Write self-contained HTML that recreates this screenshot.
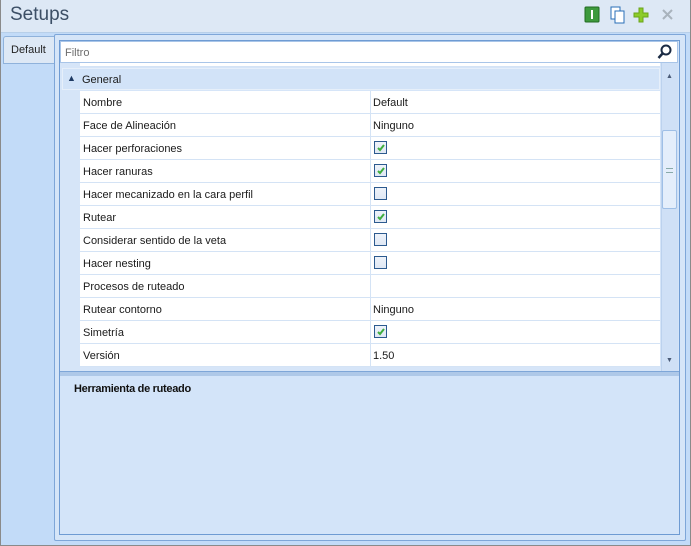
<!DOCTYPE html>
<html><head><style>
*{margin:0;padding:0;box-sizing:border-box}
body{width:691px;height:546px;overflow:hidden;background:#c2dbf8;font-family:"Liberation Sans",sans-serif;font-size:11px;color:#1a1a1a;position:relative}
.a{position:absolute}
.row{position:absolute;left:80px;width:580px;height:23px;border-bottom:1px solid #d4e3f5;background:#fff}
.row .n{position:absolute;left:3px;top:6px}
.row .v{position:absolute;left:293px;top:6px}
.row .sep{position:absolute;left:290px;top:0;width:1px;height:23px;background:#d4e3f5}
.cb{position:absolute;left:294px;top:4px;width:13px;height:13px;border:1px solid #2c5a8f;background:linear-gradient(#eef3fa,#dfe8f4)}
.cb svg{position:absolute;left:1px;top:1px}
</style></head><body>
<div class="a" style="left:0;top:0;width:691px;height:546px;border:1px solid #8a8a8a;border-top:none"></div>
<div class="a" style="left:1px;top:0;width:689px;height:33px;background:#dde8f5;border-bottom:1px solid #b7cfe9"></div>
<div class="a" style="left:10px;top:4px;font-size:19px;color:#3c4f66">Setups</div>
<svg class="a" style="left:584px;top:6px" width="100" height="18">
<rect x="1" y="1" width="14" height="15" rx="1" fill="#3d9a3d" stroke="#216b21"/><rect x="7" y="4" width="2" height="9" fill="#fff"/>
<rect x="27" y="1" width="9" height="12" fill="#fff" stroke="#2a6fb8"/><rect x="31" y="5" width="9" height="12" fill="#fff" stroke="#2a6fb8"/>
<path d="M55 2h4v5h5v4h-5v5h-4v-5h-5v-4h5z" fill="#8ccc2a" stroke="#6aa51a"/>
<path d="M79 4l9 9M88 4l-9 9" stroke="#a9b3bd" stroke-width="2"/>
</svg>
<div class="a" style="left:3px;top:36px;width:53px;height:28px;background:#dde8f5;border:1px solid #8fb2db;border-right:none;border-radius:3px 0 0 0"></div>
<div class="a" style="left:11px;top:44px;color:#222">Default</div>
<div class="a" style="left:54px;top:34px;width:632px;height:507px;border:1px solid #7ea6d8;background:#d5e5f8;border-radius:2px"></div>
<div class="a" style="left:59px;top:40px;width:621px;height:495px;border:1px solid #6e9bd3;background:#d3e4f9"></div>
<div class="a" style="left:60px;top:41px;width:618px;height:22px;background:#fff;border:1px solid #a9c5e8"></div>
<div class="a" style="left:65px;top:47px;color:#6d6d6d">Filtro</div>
<svg class="a" style="left:657px;top:44px" width="16" height="16"><circle cx="9" cy="6" r="4.5" fill="none" stroke="#1b2b44" stroke-width="2"/><path d="M6 9l-4.5 5" stroke="#1b2b44" stroke-width="2.5"/></svg>
<div class="a" style="left:60px;top:63px;width:601px;height:308px;background:#d6e5f8"></div>
<div class="a" style="left:80px;top:63px;width:580px;height:4px;background:#fff;border-bottom:1px solid #d4e3f5"></div>
<div class="a" style="left:62px;top:68px;width:598px;height:22px;background:#d2e3f8;border:1px solid #e6effa"></div>
<div class="a" style="left:67px;top:73px;font-size:9px;color:#1e3a63">&#9650;</div>
<div class="a" style="left:82px;top:74px">General</div>
<div class="row" style="top:91px"><span class="n">Nombre</span><div class="sep"></div><span class="v">Default</span></div>
<div class="row" style="top:114px"><span class="n">Face de Alineación</span><div class="sep"></div><span class="v">Ninguno</span></div>
<div class="row" style="top:137px"><span class="n">Hacer perforaciones</span><div class="sep"></div><div class="cb"><svg width="10" height="10"><path d="M2 5l2 2 4-5" stroke="#3fae3f" stroke-width="2" fill="none"/></svg></div></div>
<div class="row" style="top:160px"><span class="n">Hacer ranuras</span><div class="sep"></div><div class="cb"><svg width="10" height="10"><path d="M2 5l2 2 4-5" stroke="#3fae3f" stroke-width="2" fill="none"/></svg></div></div>
<div class="row" style="top:183px"><span class="n">Hacer mecanizado en la cara perfil</span><div class="sep"></div><div class="cb"></div></div>
<div class="row" style="top:206px"><span class="n">Rutear</span><div class="sep"></div><div class="cb"><svg width="10" height="10"><path d="M2 5l2 2 4-5" stroke="#3fae3f" stroke-width="2" fill="none"/></svg></div></div>
<div class="row" style="top:229px"><span class="n">Considerar sentido de la veta</span><div class="sep"></div><div class="cb"></div></div>
<div class="row" style="top:252px"><span class="n">Hacer nesting</span><div class="sep"></div><div class="cb"></div></div>
<div class="row" style="top:275px"><span class="n">Procesos de ruteado</span><div class="sep"></div></div>
<div class="row" style="top:298px"><span class="n">Rutear contorno</span><div class="sep"></div><span class="v">Ninguno</span></div>
<div class="row" style="top:321px"><span class="n">Simetría</span><div class="sep"></div><div class="cb"><svg width="10" height="10"><path d="M2 5l2 2 4-5" stroke="#3fae3f" stroke-width="2" fill="none"/></svg></div></div>
<div class="row" style="top:344px"><span class="n">Versión</span><div class="sep"></div><span class="v">1.50</span></div>
<div class="a" style="left:661px;top:63px;width:17px;height:308px;background:#cfe0f6;border-left:1px solid #bcd2ee"></div>
<div class="a" style="left:666px;top:73px;font-size:7px;color:#4a5b78">&#9650;</div>
<div class="a" style="left:666px;top:357px;font-size:7px;color:#4a5b78">&#9660;</div>
<div class="a" style="left:662px;top:130px;width:15px;height:79px;border:1px solid #9fbfe6;background:#e4eefb;border-radius:2px"></div>
<div class="a" style="left:666px;top:168px;width:7px;height:5px;border-top:1px solid #8aa;border-bottom:1px solid #8aa"></div>
<div class="a" style="left:60px;top:371px;width:619px;height:5px;background:#aec8e8;border-top:1px solid #7ea6d8"></div>
<div class="a" style="left:74px;top:383px;font-weight:bold;color:#111;letter-spacing:-0.3px">Herramienta de ruteado</div>
</body></html>
